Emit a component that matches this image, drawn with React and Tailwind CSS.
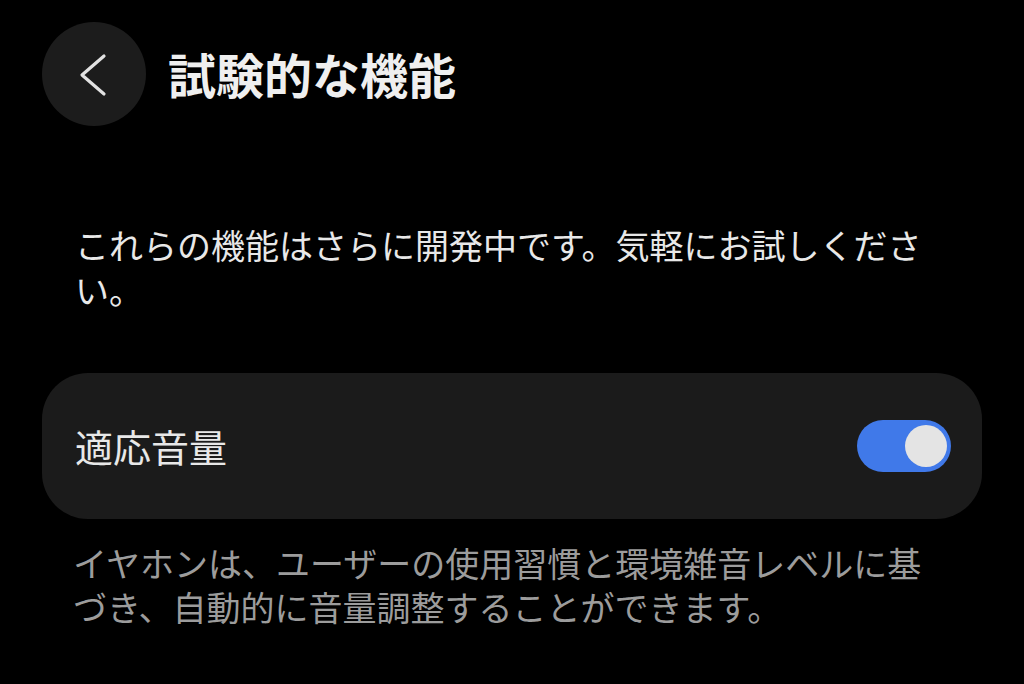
const font = { fontFamily: '"Noto Sans CJK JP", "Noto Sans", sans-serif' };

const BackButton = () => (
  <button
    type="button"
    className="w-[104px] h-[104px] rounded-full bg-[#1c1c1c] flex items-center justify-center shrink-0"
    aria-label="戻る"
  >
    <svg width="104" height="104" viewBox="0 0 104 104" fill="none">
      <path
        d="M62 34 L40 53 L62 72"
        stroke="#e2e2e2"
        strokeWidth="3.2"
        strokeLinecap="round"
        strokeLinejoin="round"
      />
    </svg>
  </button>
);

const Toggle = ({ on }) => (
  <div
    className={`w-[94px] h-[52px] rounded-full flex items-center px-[4px] ${
      on ? 'bg-[#4079e9] justify-end' : 'bg-[#555] justify-start'
    }`}
  >
    <div className="w-[42px] h-[42px] rounded-full bg-[#e4e4e4]" />
  </div>
);

export default function App() {
  return (
    <div className="w-[1024px] h-[684px] bg-black overflow-hidden" style={font}>
      <div className="flex items-center gap-[22px] pt-[22px] pl-[42px]">
        <BackButton />
        <h1 className="text-[48px] font-bold leading-none text-[#efefef] -mt-[2px]">試験的な機能</h1>
      </div>

      <p className="mt-[96px] px-[75px] text-[34px] leading-[45px] text-[#e8e8e8]">
        これらの機能はさらに開発中です。気軽にお試しください。
      </p>

      <div className="mt-[61px] mx-[42px] h-[146px] rounded-[46px] bg-[#1b1b1b] flex items-center justify-between pl-[33px] pr-[31px]">
        <span className="text-[38px] leading-none text-[#e8e8e8]">適応音量</span>
        <Toggle on />
      </div>

      <p className="mt-[22px] px-[73px] text-[34px] leading-[44px] text-[#9c9c9c]">
        イヤホンは、ユーザーの使用習慣と環境雑音レベルに基づき、自動的に音量調整することができます。
      </p>
    </div>
  );
}
